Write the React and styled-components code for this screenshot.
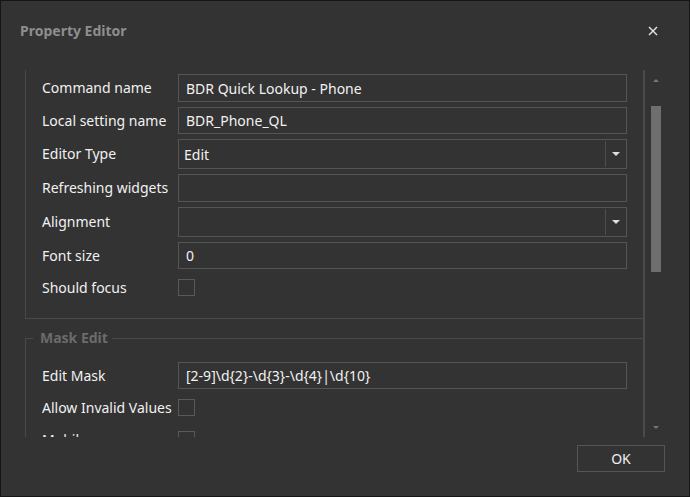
import React from "react";
import styled, { createGlobalStyle } from "styled-components";

const GlobalStyle = createGlobalStyle`
  body {
    margin: 0;
    background: #333333;
  }
`;

const fields = [
  { label: "Command name", type: "text", value: "BDR Quick Lookup - Phone", h: 28 },
  { label: "Local setting name", type: "text", value: "BDR_Phone_QL", h: 27 },
  { label: "Editor Type", type: "combo", value: "Edit", h: 30 },
  { label: "Refreshing widgets", type: "text", value: "", h: 28 },
  { label: "Alignment", type: "combo", value: "", h: 30 },
  { label: "Font size", type: "text", value: "0", h: 27 },
  { label: "Should focus", type: "check", h: 27 },
];

const maskFields = [
  { label: "Edit Mask", type: "text", value: "[2-9]\\d{2}-\\d{3}-\\d{4}|\\d{10}", h: 27 },
  { label: "Allow Invalid Values", type: "check", h: 27 },
  { label: "Mobile", type: "check", h: 27 },
];

const Field = ({ f }) => (
  <Row $h={f.h}>
    <Label>{f.label}</Label>
    {f.type === "text" && <TextBox>{f.value}</TextBox>}
    {f.type === "combo" && (
      <Combo>
        <ComboText>{f.value}</ComboText>
        <DropButton>
          <DownTriangle />
        </DropButton>
      </Combo>
    )}
    {f.type === "check" && <CheckBox />}
  </Row>
);

const App = () => {
  return (
    <>
      <GlobalStyle />
      <Window>
        <TitleBar>
          <Title>Property Editor</Title>
          <CloseButton>
            <svg width="10" height="10" viewBox="0 0 10 10">
              <path d="M1 1 L9 9 M9 1 L1 9" stroke="#e6e6e6" strokeWidth="1.4" />
            </svg>
          </CloseButton>
        </TitleBar>
        <Body>
          <Panel>
            <Group>
              {fields.map((f) => (
                <Field key={f.label} f={f} />
              ))}
            </Group>
            <FieldSet>
              <Legend>Mask Edit</Legend>
              {maskFields.map((f) => (
                <Field key={f.label} f={f} />
              ))}
            </FieldSet>
          </Panel>
          <ScrollBar>
            <ArrowArea>
              <UpTriangle />
            </ArrowArea>
            <Thumb />
            <ArrowArea>
              <ScrollDown />
            </ArrowArea>
          </ScrollBar>
        </Body>
        <Footer>
          <Button>OK</Button>
        </Footer>
      </Window>
    </>
  );
};

const Window = styled.div`
  width: 690px;
  height: 497px;
  box-sizing: border-box;
  border: 1px solid #161616;
  background: #333333;
  display: flex;
  flex-direction: column;
  font-family: "Noto Sans", "Open Sans", sans-serif;
  font-size: 14px;
  color: #f1f1f1;
  overflow: hidden;
`;

const TitleBar = styled.div`
  height: 69px;
  flex: none;
  display: flex;
  align-items: flex-start;
  justify-content: space-between;
  padding: 20px 26px 0 19px;
  box-sizing: border-box;
`;

const Title = styled.div`
  font-weight: 700;
  font-size: 14px;
  line-height: 20px;
  color: #8e8e8e;
`;

const CloseButton = styled.div`
  width: 20px;
  height: 20px;
  display: flex;
  align-items: center;
  justify-content: center;
`;

const Body = styled.div`
  height: 367px;
  flex: none;
  display: flex;
  margin-left: 24px;
  overflow: hidden;
`;

const Panel = styled.div`
  width: 620px;
  box-sizing: border-box;
  border-right: 2px solid #4a4a4a;
  flex: none;
`;

const Group = styled.div`
  border-left: 1px solid #4a4a4a;
  border-bottom: 1px solid #4a4a4a;
  padding: 4px 16px 17px 16px;
  display: flex;
  flex-direction: column;
  gap: 5px;
`;

const FieldSet = styled.fieldset`
  margin: 9px 0 0 0;
  border: 1px solid #4a4a4a;
  border-right: none;
  border-bottom: none;
  padding: 14px 16px 0 16px;
  min-inline-size: 0;
  display: flex;
  flex-direction: column;
  gap: 5px;
`;

const Legend = styled.legend`
  margin-left: -9px;
  padding: 0 4px 0 7px;
  font-weight: 700;
  line-height: 20px;
  color: #6b6b6b;
`;

const Row = styled.div`
  height: ${(p) => p.$h}px;
  display: flex;
  align-items: center;
  flex: none;
`;

const Label = styled.div`
  width: 136px;
  flex: none;
  white-space: nowrap;
  line-height: 20px;
`;

const TextBox = styled.div`
  flex: 1;
  height: 100%;
  box-sizing: border-box;
  border: 1px solid #555555;
  padding: 0 7px;
  display: flex;
  align-items: center;
  white-space: nowrap;
`;

const Combo = styled.div`
  flex: 1;
  height: 100%;
  box-sizing: border-box;
  border: 1px solid #555555;
  display: flex;
`;

const ComboText = styled.div`
  flex: 1;
  padding: 0 5px;
  display: flex;
  align-items: center;
`;

const DropButton = styled.div`
  width: 20px;
  border-left: 1px solid #4e4e4e;
  margin: 1px 0;
  display: flex;
  align-items: center;
  justify-content: center;
`;

const DownTriangle = styled.div`
  width: 0;
  height: 0;
  border-left: 4px solid transparent;
  border-right: 4px solid transparent;
  border-top: 4px solid #e0e0e0;
`;

const CheckBox = styled.div`
  width: 17px;
  height: 17px;
  box-sizing: border-box;
  border: 1px solid #595959;
`;

const ScrollBar = styled.div`
  width: 21px;
  flex: none;
  display: flex;
  flex-direction: column;
  align-items: center;
`;

const ArrowArea = styled.div`
  height: 20px;
  flex: none;
  display: flex;
  align-items: center;
  justify-content: center;
  &:last-child {
    margin-top: auto;
  }
`;

const UpTriangle = styled.div`
  width: 0;
  height: 0;
  border-left: 3px solid transparent;
  border-right: 3px solid transparent;
  border-bottom: 3px solid #777777;
`;

const ScrollDown = styled.div`
  width: 0;
  height: 0;
  border-left: 3px solid transparent;
  border-right: 3px solid transparent;
  border-top: 3px solid #777777;
`;

const Thumb = styled.div`
  width: 10px;
  height: 166px;
  margin-top: 16px;
  background: #6e6e6e;
`;

const Footer = styled.div`
  flex: 1;
  display: flex;
  justify-content: flex-end;
  align-items: flex-start;
  padding: 8px 24px 0 0;
`;

const Button = styled.div`
  width: 88px;
  height: 27px;
  box-sizing: border-box;
  border: 1px solid #555555;
  display: flex;
  align-items: center;
  justify-content: center;
`;

export default App;
